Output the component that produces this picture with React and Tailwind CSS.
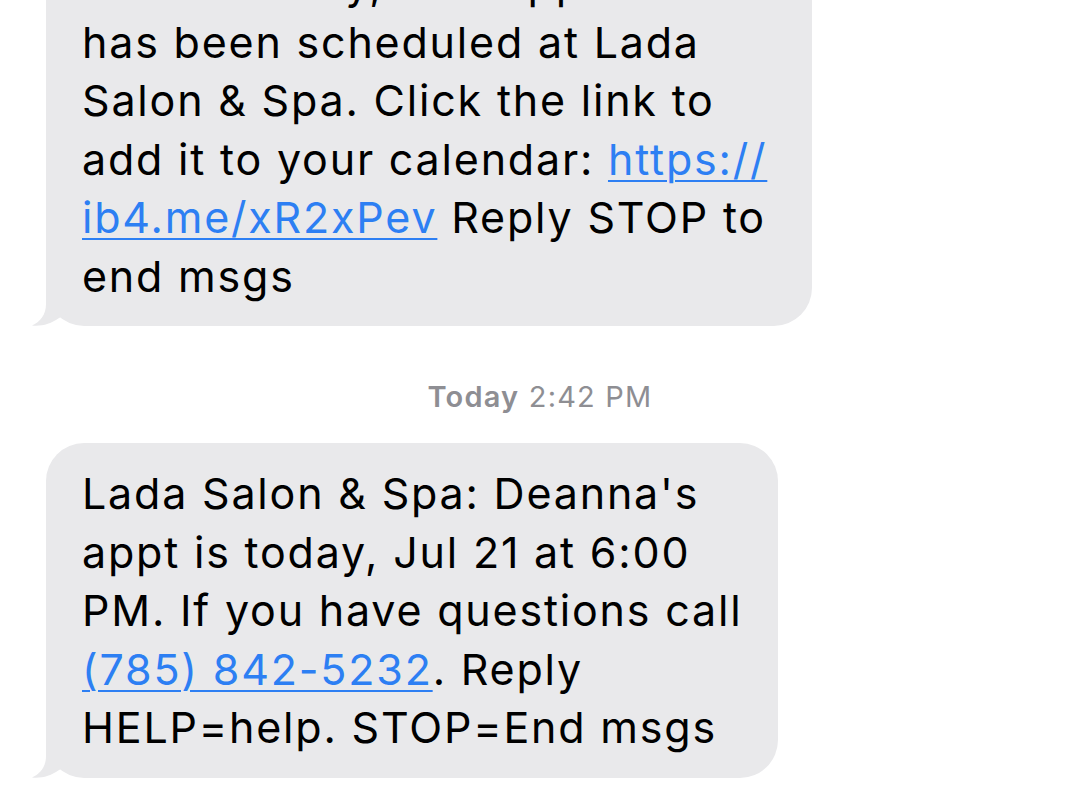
import React from 'react';

const Tail = () => (
  <svg className="absolute left-[-14px] bottom-0 w-[40px] h-[44px]" viewBox="0 0 40 44" fill="#e9e9eb">
    <path d="M14 0 L14 22 C14 33 8 40 0 43.5 C9 44.5 19 42 27 36 L40 30 L40 0 Z" />
  </svg>
);

const Link = ({ children }) => (
  <span className="text-[#2d7ff3] underline decoration-[#2d7ff3] decoration-2 underline-offset-[5px]">{children}</span>
);

function Bubble({ className, lines }) {
  return (
    <div className={`relative bg-[#e9e9eb] rounded-[38px] pl-[36px] pr-4 py-[21px] ${className}`}>
      {lines.map((line, i) => (
        <div key={i} className="whitespace-nowrap">{line}</div>
      ))}
      <Tail />
    </div>
  );
}

export default function App() {
  return (
    <main className="h-[808px] overflow-hidden bg-white font-['Inter','Liberation_Sans',sans-serif] text-black text-[43px] leading-[58.5px] tracking-[1.8px]">
      <div className="flex flex-col items-start pl-[46px]">
        <Bubble
          className="w-[766px] -mt-[67px]"
          lines={[
            'Your Monday, new appt',
            'has been scheduled at Lada',
            'Salon & Spa. Click the link to',
            <>add it to your calendar: <Link>https://</Link></>,
            <><Link>ib4.me/xR2xPev</Link> Reply STOP to</>,
            'end msgs',
          ]}
        />

        <div className="self-stretch pr-[46px] mt-[56px] mb-[32px] text-center text-[29px] leading-[29px] text-[#8e8e93] tracking-[1.2px]">
          <span className="font-semibold">Today</span> 2:42 PM
        </div>

        <Bubble
          className="w-[732px]"
          lines={[
            "Lada Salon & Spa: Deanna's",
            'appt is today, Jul 21 at 6:00',
            'PM. If you have questions call',
            <><Link>(785) 842-5232</Link>. Reply</>,
            'HELP=help. STOP=End msgs',
          ]}
        />
      </div>
    </main>
  );
}
